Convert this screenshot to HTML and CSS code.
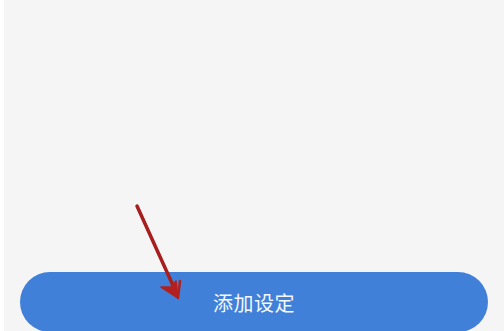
FILE: index.html
```html
<!DOCTYPE html>
<html lang="zh-CN">
<head>
  <meta charset="UTF-8">
  <title>添加设定</title>
  <link rel="stylesheet" href="styles.css">
</head>
<body>
  <div class="screen">
    <div class="content"></div>
    <div class="footer">
      <button class="btn-add" type="button">添加设定</button>
    </div>

    <!-- annotation arrow pointing at the button -->
    <svg class="arrow" width="504" height="331" viewBox="0 0 504 331">
      <line x1="137" y1="206" x2="176" y2="292" stroke="#a81d1d" stroke-width="3.5" stroke-linecap="round"/>
      <path d="M178 298 L161 287 L171 287 L176 281 Z" fill="#b3201f" stroke="#b3201f" stroke-width="1.5" stroke-linejoin="round"/>
      <path d="M178 298 L180 281" stroke="#b3201f" stroke-width="2.5" stroke-linecap="round"/>
    </svg>
  </div>
</body>
</html>
```

FILE: styles.css
```css
body {
  margin: 0;
  background: #ffffff;
  font-family: "Noto Sans CJK SC", "Noto Sans", sans-serif;
}
.screen {
  position: relative;
  margin-left: 4px;
  height: 331px;
  overflow: hidden;
  background: #f5f5f5;
  display: flex;
  flex-direction: column;
}
.content {
  flex: 1;
}
.footer {
  padding: 0 16px;
  margin-bottom: -1px;
}
.btn-add {
  display: block;
  width: 100%;
  height: 60px;
  border: none;
  border-radius: 30px;
  background: #4180d8;
  color: #f4f7fc;
  font-family: inherit;
  font-size: 20px;
  letter-spacing: 0.5px;
  cursor: pointer;
}
.arrow {
  position: absolute;
  left: -4px;
  top: 0;
  pointer-events: none;
}
```
